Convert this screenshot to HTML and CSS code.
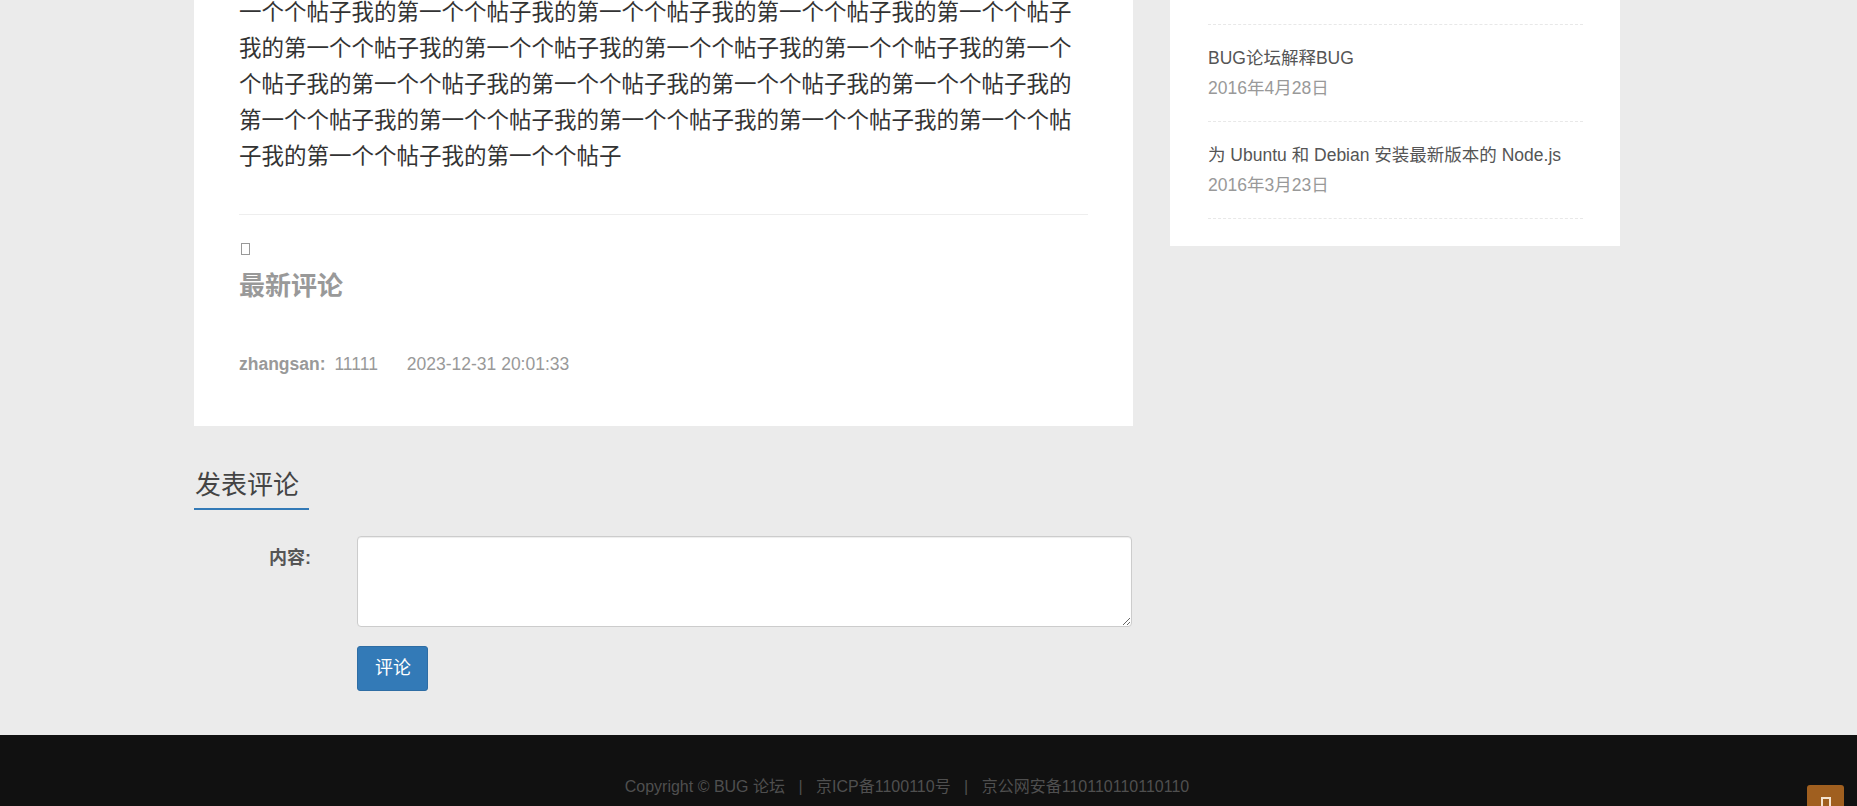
FILE: index.html
```html
<!DOCTYPE html>
<html lang="zh-CN">
<head>
    <meta charset="UTF-8">
    <meta name="viewport" content="width=device-width, initial-scale=1.0">
    <title>BUG 论坛 - 帖子详情</title>
    <link rel="stylesheet" href="styles.css">
</head>
<body>

    <div class="container">
        <div class="row">
            <!-- 帖子主体 -->
            <div class="main-col">
                <div class="post-card">
                    <p class="post-content">一个个帖子我的第一个个帖子我的第一个个帖子我的第一个个帖子我的第一个个帖子我的第一个个帖子我的第一个个帖子我的第一个个帖子我的第一个个帖子我的第一个个帖子我的第一个个帖子我的第一个个帖子我的第一个个帖子我的第一个个帖子我的第一个个帖子我的第一个个帖子我的第一个个帖子我的第一个个帖子我的第一个个帖子我的第一个个帖子我的第一个个帖子</p>

                    <hr class="post-divider">

                    <div class="comments">
                        <span class="icon-missing"></span>
                        <h3 class="comments-title">最新评论</h3>
                        <div class="comment-item">
                            <span class="c-user">zhangsan:</span>
                            <span class="c-text">11111</span>
                            <span class="c-time">2023-12-31 20:01:33</span>
                        </div>
                    </div>
                </div>

                <!-- 发表评论 -->
                <div class="reply">
                    <h3 class="reply-title">发表评论</h3>
                    <form class="reply-form">
                        <div class="form-row">
                            <label class="form-label" for="content">内容:</label>
                            <textarea id="content" class="form-control"></textarea>
                        </div>
                        <div class="form-row">
                            <span class="form-label"></span>
                            <button type="button" class="btn-submit">评论</button>
                        </div>
                    </form>
                </div>
            </div>

            <!-- 侧边栏 -->
            <div class="side-col">
                <ul class="side-list">
                    <li>
                        <a class="side-link" href="#">BUG论坛解释BUG</a>
                        <span class="side-date">2016年4月28日</span>
                    </li>
                    <li>
                        <a class="side-link" href="#">为 Ubuntu 和 Debian 安装最新版本的 Node.js</a>
                        <span class="side-date">2016年3月23日</span>
                    </li>
                </ul>
            </div>
        </div>
    </div>

    <footer class="footer">
        <div class="container footer-inner">
            Copyright © BUG 论坛 <span class="sep">|</span> 京ICP备1100110号 <span class="sep">|</span> 京公网安备110110110110110
        </div>
    </footer>

    <a class="back-top" href="#"><span class="icon-missing light"></span></a>

</body>
</html>
```

FILE: styles.css
```css
/* Reset dasar */
* {
    margin: 0;
    padding: 0;
    box-sizing: border-box;
}

body {
    font-family: "Liberation Sans", "Noto Sans CJK SC", sans-serif;
    background: #ebebeb;
    color: #333;
    overflow: hidden;
}

.container {
    width: 1426px;
    margin-left: 194px;
}

.row {
    display: flex;
    gap: 37px;
    align-items: flex-start;
}

/* Kolom utama */
.main-col {
    width: 939px;
}

.post-card {
    background: #fff;
    padding: 0 45px 49px;
}

.post-content {
    margin-top: -5px;
    font-size: 22.5px;
    line-height: 36px;
    color: #333;
}

.post-divider {
    border: 0;
    border-top: 1px solid #eee;
    margin-top: 39px;
}

.icon-missing {
    display: block;
    width: 9px;
    height: 12px;
    border: 1px solid #999;
    margin: 28px 0 0 2px;
}

.comments-title {
    margin-top: 17px;
    font-size: 26px;
    line-height: 1.1;
    font-weight: 700;
    color: #999;
}

.comment-item {
    margin-top: 51px;
    font-size: 17.5px;
    line-height: 25px;
    color: #999;
}

.c-user {
    font-weight: 700;
}

.c-text {
    margin-left: 4px;
}

.c-time {
    margin-left: 24px;
}

/* Form komentar */
.reply-title {
    display: inline-block;
    margin-top: 45px;
    padding: 0 10px 9px 1px;
    font-size: 26px;
    line-height: 1.1;
    font-weight: 400;
    color: #444;
    border-bottom: 2px solid #337ab7;
}

.reply-form {
    margin-top: 26px;
}

.form-row {
    display: flex;
    margin-bottom: 19px;
}

.form-row:last-child {
    margin-bottom: 0;
}

.form-label {
    width: 163px;
    flex-shrink: 0;
    padding: 10px 46px 0 0;
    text-align: right;
    font-size: 18px;
    line-height: 24px;
    font-weight: 700;
    color: #555;
}

.form-control {
    width: 775px;
    height: 91px;
    border: 1px solid #ccc;
    border-radius: 4px;
    box-shadow: inset 0 1px 1px rgba(0, 0, 0, 0.075);
    background: #fff;
    font-family: inherit;
    font-size: 16px;
    padding: 6px 12px;
}

.btn-submit {
    padding: 10px 16px 10px 17px;
    font-family: inherit;
    font-size: 18px;
    line-height: 23px;
    color: #fff;
    background: #337ab7;
    border: 1px solid #2e6da4;
    border-radius: 3px;
}

/* Sidebar */
.side-col {
    width: 450px;
    background: #fff;
    padding: 24px 37px 27px 38px;
}

.side-list {
    list-style: none;
}

.side-list li {
    border-top: 1px dashed #e8e8e8;
    padding: 21px 0;
}

.side-list li:last-child {
    border-bottom: 1px dashed #e8e8e8;
}

.side-link {
    display: block;
    font-size: 17.5px;
    line-height: 24px;
    color: #555;
    text-decoration: none;
}

.side-date {
    display: block;
    margin-top: 6px;
    font-size: 17.5px;
    line-height: 24px;
    color: #999;
}

/* Footer */
.footer {
    margin-top: 44px;
    background: #111;
    padding: 40px 0;
}

.footer-inner {
    color: #4f4f4f;
    text-align: center;
    font-size: 16px;
    line-height: 24px;
}

.sep {
    margin: 0 9px;
}

/* Tombol kembali ke atas */
.back-top {
    position: fixed;
    right: 13px;
    bottom: -16px;
    width: 37px;
    height: 37px;
    background: #a05f1f;
    border-radius: 3px;
    display: flex;
    justify-content: center;
}

.icon-missing.light {
    width: 10px;
    height: 14px;
    margin: 12px 0 0;
    border: 2px solid #f4e3d0;
}
```
